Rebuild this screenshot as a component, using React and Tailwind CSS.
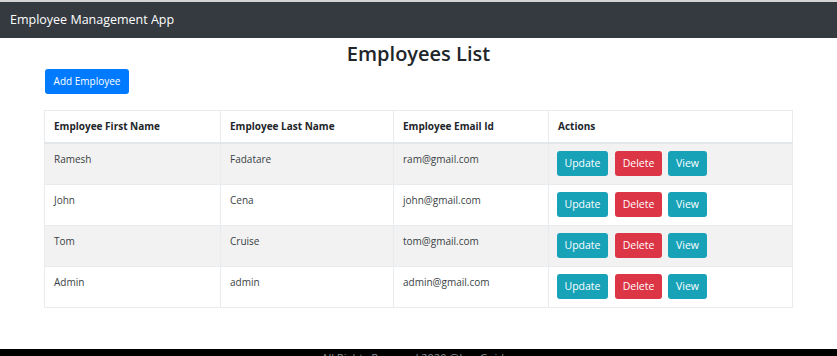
import React from "react";

const rows = [
  ["Ramesh", "Fadatare", "ram@gmail.com"],
  ["John", "Cena", "john@gmail.com"],
  ["Tom", "Cruise", "tom@gmail.com"],
  ["Admin", "admin", "admin@gmail.com"],
];

export default function App() {
  return (
    <div className="bg-white text-[#212529] flex flex-col" style={{ fontFamily: '"Open Sans", "Noto Sans", sans-serif' }}>
      <div className="h-[2px] bg-[#d4d4d4]" />
      <nav className="h-[36px] bg-[#343a40] flex items-center px-[10px]">
        <span className="text-white text-[12.5px] leading-none">Employee Management App</span>
      </nav>
      <h2 className="text-center text-[20px] font-semibold leading-none mt-[6px] h-[22px] text-[#212529]">Employees List</h2>
      <div className="w-[748px] ml-[44px]">
        <div className="mt-[1px] ml-[1px]">
          <button className="h-[25px] w-[84px] bg-[#007bff] text-white text-[10px] rounded-[3px] leading-none">Add Employee</button>
        </div>
        <table className="mt-[16px] w-[748px] border-collapse table-fixed text-[10px]">
          <colgroup>
            <col className="w-[176px]" />
            <col className="w-[173px]" />
            <col className="w-[155px]" />
            <col className="w-[244px]" />
          </colgroup>
          <thead>
            <tr className="h-[33px]">
              {["Employee First Name", "Employee Last Name", "Employee Email Id", "Actions"].map((h) => (
                <th key={h} className="text-left font-bold px-[9px] align-middle border border-[#e9ecef] border-b-2 border-b-[#e3e6e9]">{h}</th>
              ))}
            </tr>
          </thead>
          <tbody>
            {rows.map((r, i) => (
              <tr key={i} className={`h-[41px] ${i % 2 === 0 ? "bg-[#f2f2f2]" : "bg-white"}`}>
                {r.map((c, j) => (
                  <td key={j} className="px-[9px] pt-[8px] align-top border border-[#e9ecef] text-[#3a3f44] leading-[15px]">{c}</td>
                ))}
                <td className="px-[8px] pt-[7px] pb-[7px] align-top border border-[#e9ecef]">
                  <div className="flex gap-[7px]">
                    <button className="h-[25px] w-[51px] bg-[#17a2b8] text-white rounded-[3px] text-[10.5px] leading-none">Update</button>
                    <button className="h-[25px] w-[47px] bg-[#dc3545] text-white rounded-[3px] text-[10.5px] leading-none">Delete</button>
                    <button className="h-[25px] w-[39px] bg-[#17a2b8] text-white rounded-[3px] text-[10.5px] leading-none -ml-[1px]">View</button>
                  </div>
                </td>
              </tr>
            ))}
          </tbody>
        </table>
      </div>
      <div className="h-[41px]" />
      <footer className="h-[30px] bg-black text-center text-[#8a8f94] text-[11px] leading-[14px] pt-[2px]">All Rights Reserved 2020 @JavaGuides</footer>
    </div>
  );
}
